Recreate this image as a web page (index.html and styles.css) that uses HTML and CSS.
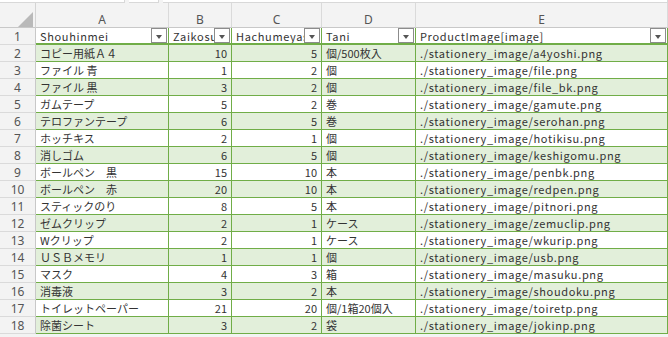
FILE: index.html
```html
<!DOCTYPE html>
<html lang="ja">
<head>
<meta charset="utf-8">
<title>Sheet</title>
<link rel="stylesheet" href="styles.css">
</head>
<body>
<div class="topbar">
  <div class="tb tb1"></div>
  <div class="tb tb2"></div>
  <div class="tb tb3"></div>
</div>
<div class="sheet">
  <div class="corner"><svg width="35" height="25" viewBox="0 0 35 25"><polygon points="18,24 33,24 33,9" fill="#b9b9b9"/></svg></div>
  <div class="ch">A</div><div class="ch">B</div><div class="ch">C</div><div class="ch">D</div><div class="ch">E</div>

  <div class="rh">1</div>
  <div class="c hd l">Shouhinmei<span class="dd"></span></div>
  <div class="c hd l">Zaikosu<span class="dd"></span></div>
  <div class="c hd l">Hachumeyasu<span class="dd"></span></div>
  <div class="c hd l">Tani<span class="dd"></span></div>
  <div class="c hd l">ProductImage[image]<span class="dd"></span></div>

  <div class="rh">2</div><div class="c g">コピー用紙Ａ４</div><div class="c g n">10</div><div class="c g n">5</div><div class="c g">個/500枚入</div><div class="c g l">./stationery_image/a4yoshi.png</div>
  <div class="rh">3</div><div class="c">ファイル 青</div><div class="c n">1</div><div class="c n">2</div><div class="c">個</div><div class="c l">./stationery_image/file.png</div>
  <div class="rh">4</div><div class="c g">ファイル 黒</div><div class="c g n">3</div><div class="c g n">2</div><div class="c g">個</div><div class="c g l">./stationery_image/file_bk.png</div>
  <div class="rh">5</div><div class="c">ガムテープ</div><div class="c n">5</div><div class="c n">2</div><div class="c">巻</div><div class="c l">./stationery_image/gamute.png</div>
  <div class="rh">6</div><div class="c g">テロファンテープ</div><div class="c g n">6</div><div class="c g n">5</div><div class="c g">巻</div><div class="c g l">./stationery_image/serohan.png</div>
  <div class="rh">7</div><div class="c">ホッチキス</div><div class="c n">2</div><div class="c n">1</div><div class="c">個</div><div class="c l">./stationery_image/hotikisu.png</div>
  <div class="rh">8</div><div class="c g">消しゴム</div><div class="c g n">6</div><div class="c g n">5</div><div class="c g">個</div><div class="c g l">./stationery_image/keshigomu.png</div>
  <div class="rh">9</div><div class="c">ボールペン　黒</div><div class="c n">15</div><div class="c n">10</div><div class="c">本</div><div class="c l">./stationery_image/penbk.png</div>
  <div class="rh">10</div><div class="c g">ボールペン　赤</div><div class="c g n">20</div><div class="c g n">10</div><div class="c g">本</div><div class="c g l">./stationery_image/redpen.png</div>
  <div class="rh">11</div><div class="c">スティックのり</div><div class="c n">8</div><div class="c n">5</div><div class="c">本</div><div class="c l">./stationery_image/pitnori.png</div>
  <div class="rh">12</div><div class="c g">ゼムクリップ</div><div class="c g n">2</div><div class="c g n">1</div><div class="c g">ケース</div><div class="c g l">./stationery_image/zemuclip.png</div>
  <div class="rh">13</div><div class="c">Wクリップ</div><div class="c n">2</div><div class="c n">1</div><div class="c">ケース</div><div class="c l">./stationery_image/wkurip.png</div>
  <div class="rh">14</div><div class="c g">ＵＳＢメモリ</div><div class="c g n">1</div><div class="c g n">1</div><div class="c g">個</div><div class="c g l">./stationery_image/usb.png</div>
  <div class="rh">15</div><div class="c">マスク</div><div class="c n">4</div><div class="c n">3</div><div class="c">箱</div><div class="c l">./stationery_image/masuku.png</div>
  <div class="rh">16</div><div class="c g">消毒液</div><div class="c g n">3</div><div class="c g n">2</div><div class="c g">本</div><div class="c g l">./stationery_image/shoudoku.png</div>
  <div class="rh">17</div><div class="c">トイレットペーパー</div><div class="c n">21</div><div class="c n">20</div><div class="c">個/1箱20個入</div><div class="c l">./stationery_image/toiretp.png</div>
  <div class="rh">18</div><div class="c g">除菌シート</div><div class="c g n">3</div><div class="c g n">2</div><div class="c g">袋</div><div class="c g l">./stationery_image/jokinp.png</div>
</div>
</body>
</html>
```
FILE: styles.css
```css
html, body {
  margin: 0;
  padding: 0;
  background: #f3f3f3;
  overflow: hidden;
}
.topbar {
  display: flex;
  gap: 4px;
  height: 3px;
}
.tb {
  background: #ffffff;
  border-bottom: 1px solid #d8d8d8;
  border-right: 1px solid #d8d8d8;
  box-sizing: border-box;
}
.tb1 { width: 125px; }
.tb2 { width: 30px; }
.tb3 { flex: 1; }
.sheet {
  display: grid;
  grid-template-columns: 36px 133px 63px 90px 94px 252px;
  grid-template-rows: 25px repeat(18, 17px);
}
.corner {
  border-right: 1px solid #d4d4d4;
  border-bottom: 1px solid #c8c8c8;
  box-sizing: border-box;
}
.corner svg { display: block; }
.ch {
  box-sizing: border-box;
  border-right: 1px solid #dadada;
  border-bottom: 1px solid #c8c8c8;
  display: flex;
  align-items: center;
  justify-content: center;
  padding-top: 8px;
  font-family: "Noto Sans", "Liberation Sans", sans-serif;
  font-size: 12px;
  color: #555;
}
.rh {
  box-sizing: border-box;
  border-right: 1px solid #c8c8c8;
  border-bottom: 1px solid #dadada;
  display: flex;
  align-items: center;
  justify-content: center;
  font-family: "Noto Sans", "Liberation Sans", sans-serif;
  font-size: 12px;
  color: #555;
}
.c {
  box-sizing: border-box;
  background: #ffffff;
  border-right: 1px solid #70ad47;
  border-bottom: 1px solid #70ad47;
  display: flex;
  align-items: center;
  padding: 0 3px 0 4px;
  font-family: "Noto Sans CJK JP", "Noto Sans", sans-serif;
  font-size: 11px;
  color: #333;
  white-space: nowrap;
  overflow: hidden;
  position: relative;
}
.c.g { background: #e2efda; }
.c.n { justify-content: flex-end; padding-right: 4px; }
.c.l { letter-spacing: 0.65px; }
.c.hd {
  border-bottom: 2px solid #70ad47;
  border-right-color: #70ad47;
}
.dd {
  position: absolute;
  right: 1px;
  top: 0;
  width: 16px;
  height: 15px;
  box-sizing: border-box;
  background: #ffffff;
  border: 1px solid #8c8c8c;
}
.dd::after {
  content: "";
  position: absolute;
  left: 4px;
  top: 6px;
  border-left: 3.5px solid transparent;
  border-right: 3.5px solid transparent;
  border-top: 4px solid #555;
}
```
